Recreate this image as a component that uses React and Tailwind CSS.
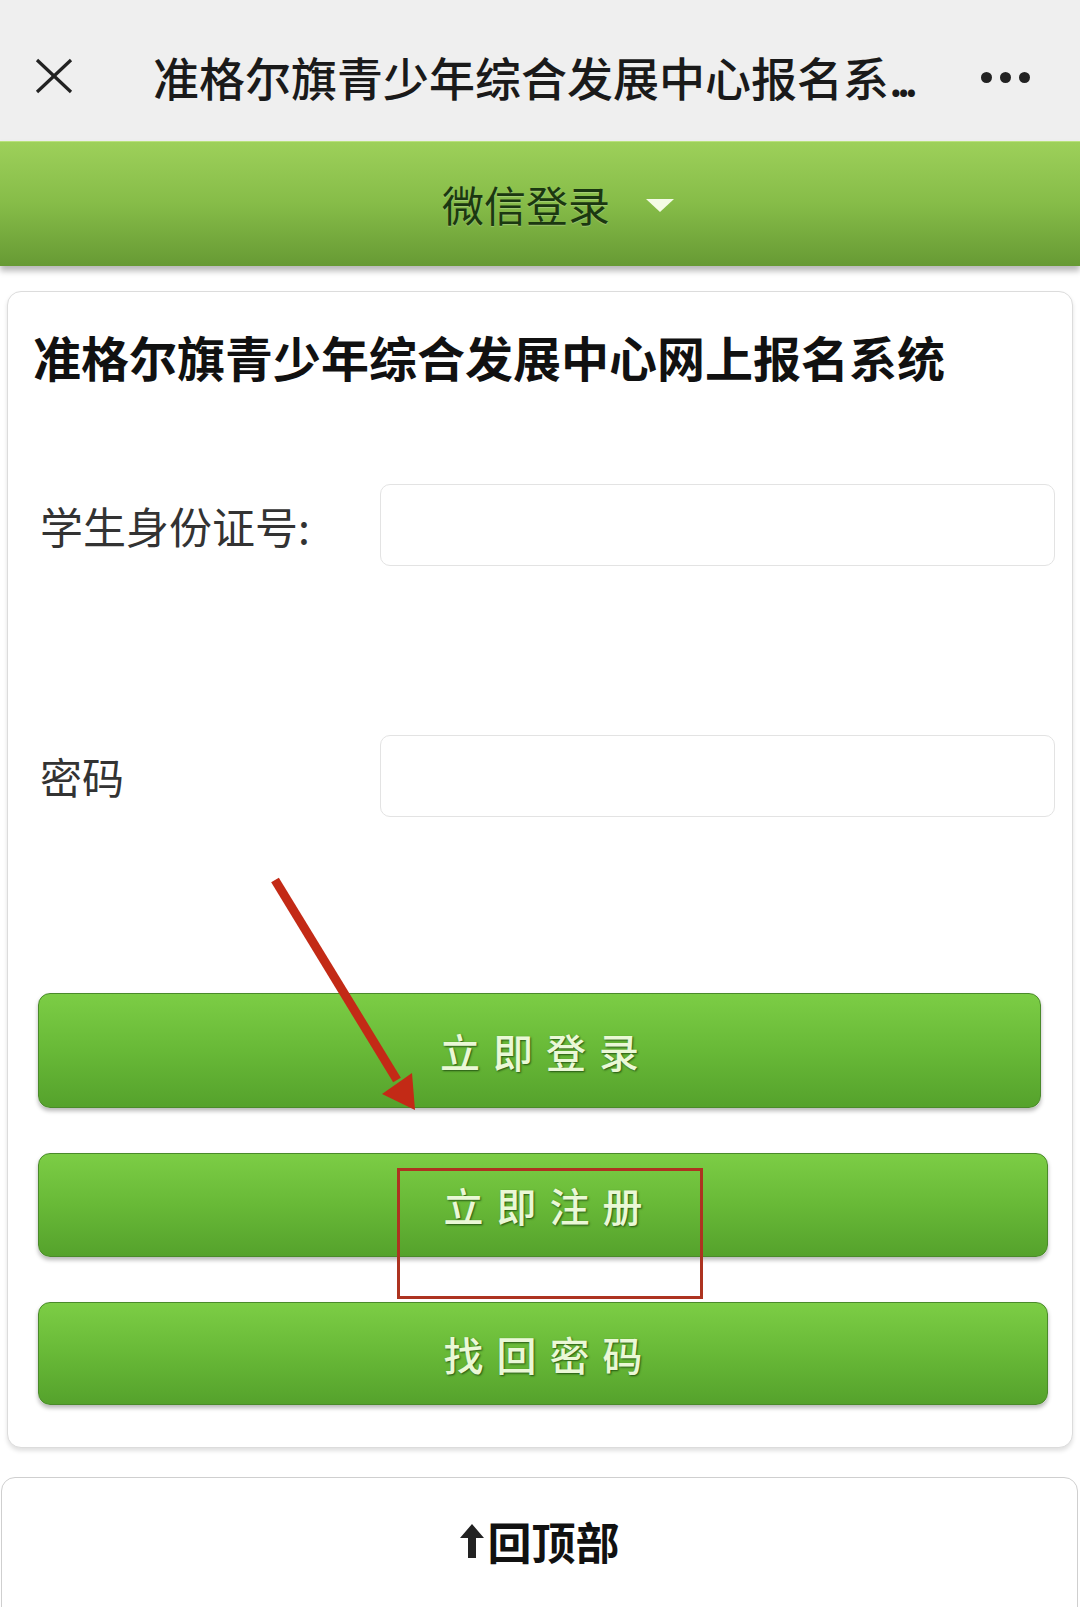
import React from "react";

function Btn({ label, h, right }) {
  return (
    <div
      className={`ml-[30px] ${right} ${h} rounded-[12px] border border-[#4a8a2a] bg-gradient-to-b from-[#7ccd45] via-[#68b937] to-[#55a22c] shadow-[0_3px_4px_rgba(0,0,0,0.28)] flex items-center justify-center`}
    >
      <span className="pl-[13px] text-[40px] leading-none font-medium tracking-[13px] text-[#eaf8d6] [text-shadow:1px_1px_2px_rgba(20,60,10,0.8)]">
        {label}
      </span>
    </div>
  );
}

export default function App() {
  return (
    <div className="relative w-[1080px] h-[1607px] overflow-hidden bg-white [font-family:'Noto_Sans_CJK_SC','Noto_Sans',sans-serif]">
      {/* top header */}
      <div className="h-[141px] bg-[#efefef] flex items-center">
        <svg className="ml-[34px] mt-[10px]" width="40" height="36" viewBox="0 0 40 36">
          <line x1="3" y1="2" x2="37" y2="34" stroke="#222" strokeWidth="3.2" />
          <line x1="37" y1="2" x2="3" y2="34" stroke="#222" strokeWidth="3.2" />
        </svg>
        <div className="ml-[79px] mt-[10px] text-[46px] leading-none font-medium text-[#1a1a1a] whitespace-nowrap">
          准格尔旗青少年综合发展中心报名系<span className="tracking-[-6px]">...</span>
        </div>
        <div className="ml-auto mr-[50px] mt-[14px] flex gap-[8px]">
          <span className="w-[11px] h-[11px] rounded-full bg-[#222]" />
          <span className="w-[11px] h-[11px] rounded-full bg-[#222]" />
          <span className="w-[11px] h-[11px] rounded-full bg-[#222]" />
        </div>
      </div>

      {/* green bar */}
      <div className="relative h-[125px] border-t border-[#b9e27c] bg-gradient-to-b from-[#9dd05a] via-[#86bc48] to-[#679a34] shadow-[0_5px_6px_rgba(0,0,0,0.28)] flex items-center justify-center pl-[36px]">
        <span className="text-[42px] leading-none text-[#1b3811] [text-shadow:0_1px_1px_rgba(255,255,255,0.25)]">
          微信登录
        </span>
        <svg className="ml-[36px] mt-[2px]" width="28" height="13" viewBox="0 0 28 13">
          <polygon points="0,0 28,0 14,13" fill="#f4fbe6" />
        </svg>
      </div>

      {/* main card */}
      <div className="mt-[25px] ml-[7px] w-[1066px] h-[1157px] rounded-[14px] border border-[#dcdcdc] bg-white shadow-[0_3px_4px_rgba(0,0,0,0.12)] pt-[36px] flex flex-col">
        <div className="pl-[25px] h-[56px] text-[48px] leading-[56px] font-bold text-[#111] whitespace-nowrap">
          准格尔旗青少年综合发展中心网上报名系统
        </div>

        <div className="mt-[100px] h-[82px] flex items-center">
          <span className="pl-[32px] w-[372px] text-[43px] leading-none text-[#333]">学生身份证号:</span>
          <div className="w-[675px] h-[82px] rounded-[10px] border border-[#e3e3e3] bg-white" />
        </div>

        <div className="mt-[169px] h-[82px] flex items-center">
          <span className="pl-[32px] w-[372px] text-[42px] leading-none text-[#333]">密码</span>
          <div className="w-[675px] h-[82px] rounded-[10px] border border-[#e3e3e3] bg-white" />
        </div>

        <div className="mt-[176px]">
          <Btn label="立即登录" h="h-[115px]" right="mr-[31px]" />
        </div>
        <div className="mt-[45px]">
          <Btn label="立即注册" h="h-[104px]" right="mr-[24px]" />
        </div>
        <div className="mt-[45px]">
          <Btn label="找回密码" h="h-[103px]" right="mr-[24px]" />
        </div>
      </div>

      {/* back to top */}
      <div className="mt-[29px] ml-[1px] w-[1077px] h-[160px] rounded-t-[14px] border border-[#cfcfcf] bg-white">
        <div className="h-[126px] flex items-center justify-center gap-[4px]">
          <svg width="24" height="34" viewBox="0 0 24 34">
            <polygon points="12,0 24,14 16,14 16,34 8,34 8,14 0,14" fill="#222" />
          </svg>
          <span className="text-[44px] leading-none font-bold text-[#111]">回顶部</span>
        </div>
      </div>

      {/* annotation: red box */}
      <div className="absolute left-[397px] top-[1168px] w-[306px] h-[131px] border-[3px] border-[#ad3320]" />

      {/* annotation: red arrow */}
      <svg className="absolute left-0 top-0 pointer-events-none" width="1080" height="1607" viewBox="0 0 1080 1607">
        <line x1="275" y1="880" x2="397" y2="1080" stroke="#c32a16" strokeWidth="9" />
        <polygon points="415,1110 382,1094 412,1073" fill="#c32a16" />
      </svg>
    </div>
  );
}
